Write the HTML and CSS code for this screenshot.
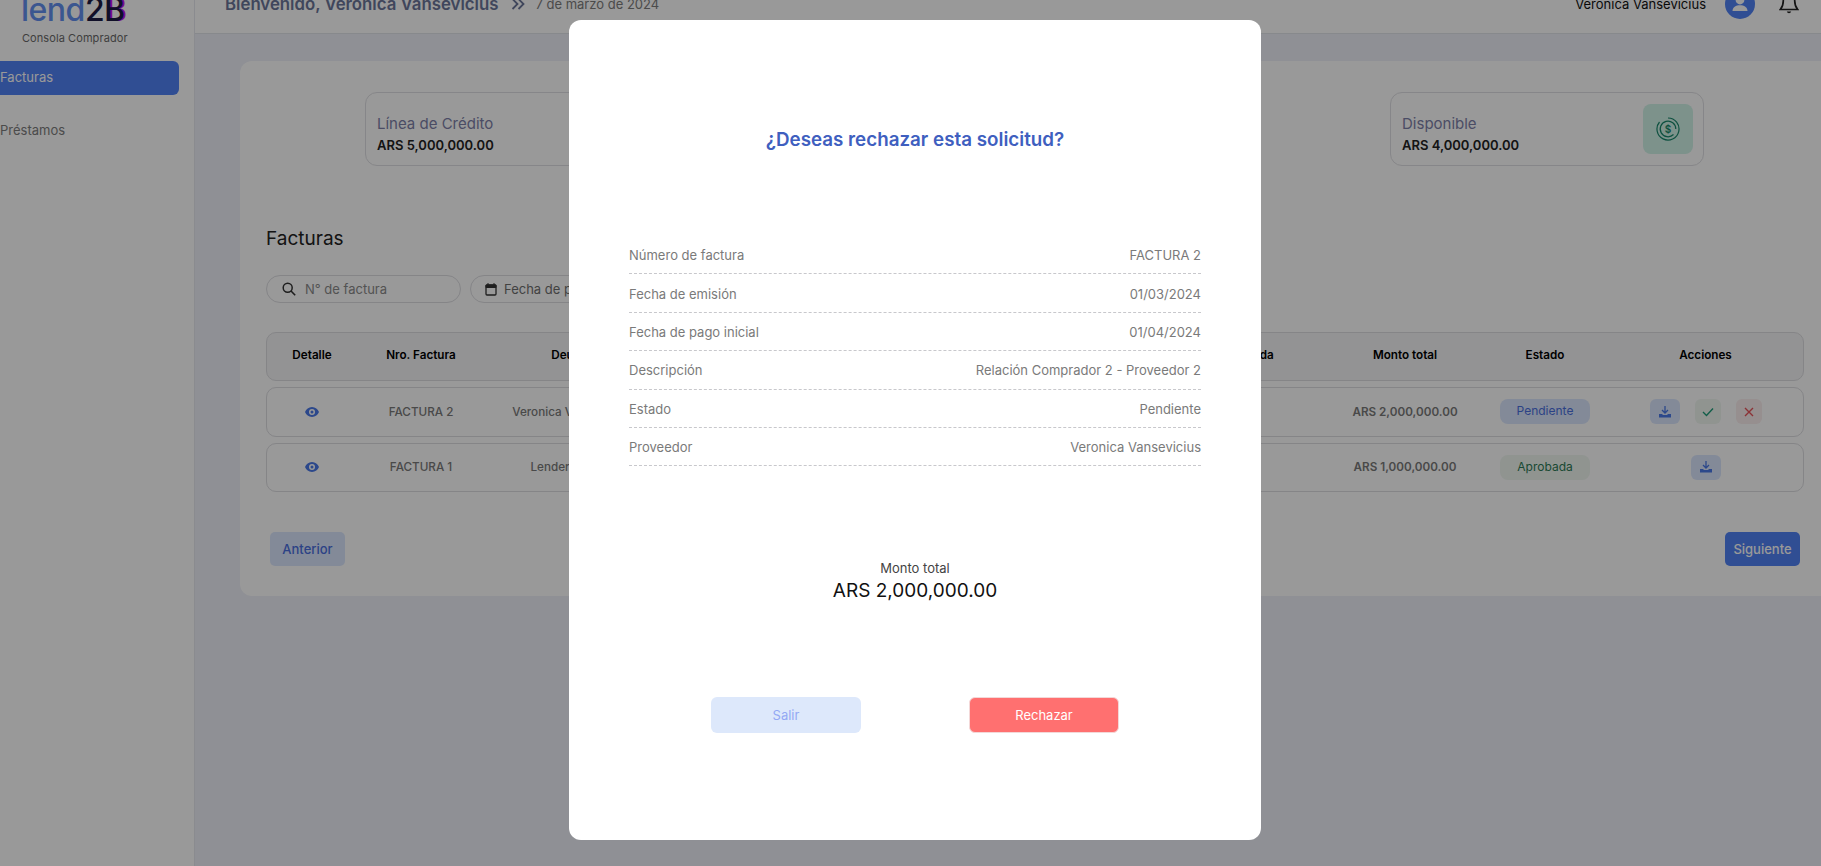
FILE: index.html
```html
<!DOCTYPE html>
<html lang="es">
<head>
<meta charset="utf-8">
<title>Facturas</title>
<link rel="stylesheet" href="styles.css">
</head>
<body>
<div class="app">
  <aside class="sidebar">
    <div class="logo"><span class="logo-mark"><span class="logo-lend">lend</span><span class="logo-2b">2<span class="logo-b">B</span></span></span></div>
    <div class="logo-sub">Consola Comprador</div>
    <nav class="nav">
      <a class="nav-item active">Facturas</a>
      <a class="nav-item">Préstamos</a>
    </nav>
  </aside>
  <div class="content">
    <header class="topbar">
      <div class="welcome">
        <span class="welcome-name">Bienvenido, Veronica Vansevicius</span>
        <svg class="chev" viewBox="0 0 14 12" width="14" height="12"><path d="M1.5 1l5 5-5 5M7.5 1l5 5-5 5" fill="none" stroke="#6b7699" stroke-width="1.8"/></svg>
        <span class="welcome-date">7 de marzo de 2024</span>
      </div>
      <div class="user">
        <span class="user-name">Veronica Vansevicius</span>
        <span class="avatar"><svg viewBox="0 0 30 30" width="30" height="30"><circle cx="15" cy="11" r="4.4" fill="#fff"/><path d="M7.5 22c0-4 3.4-5.8 7.5-5.8s7.500 1.800 7.500 5.800z" fill="#fff"/></svg></span>
        <svg class="bell" viewBox="0 0 20 24" width="20" height="24"><path d="M10 2.500c-3.700 0-5.700 2.800-5.700 6.300 0 5-1.500 7-3 8.700h17.400c-1.500-1.700-3-3.700-3-8.700 0-3.500-2-6.300-5.700-6.300z" fill="none" stroke="#222" stroke-width="1.700"/><path d="M7.800 19.500a2.300 2.300 0 0 0 4.400 0z" fill="#222"/></svg>
      </div>
    </header>
    <main class="main">
      <section class="card">
        <div class="stats">
          <div class="stat">
            <div class="stat-text"><div class="stat-label">Línea de Crédito</div><div class="stat-value">ARS 5,000,000.00</div></div>
          </div>
          <div class="stat">
            <div class="stat-text"><div class="stat-label">Utilizado</div><div class="stat-value">ARS 1,000,000.00</div></div>
          </div>
          <div class="stat">
            <div class="stat-text"><div class="stat-label">Disponible</div><div class="stat-value">ARS 4,000,000.00</div></div>
            <div class="stat-icon">
              <svg viewBox="0 0 24 24" width="24" height="24" fill="none" stroke="#17876a" stroke-width="1.200"><path d="M12 1a11 11 0 1 1-8.500 4"/><path d="M17.500 17.500A7.800 7.800 0 1 1 19.800 12"/><text x="12" y="15.500" text-anchor="middle" class="stat-dollar">$</text></svg>
            </div>
          </div>
        </div>
        <h2 class="section-title">Facturas</h2>
        <div class="filters">
          <div class="filter filter-search">
            <svg viewBox="0 0 14 14" width="14" height="14"><circle cx="5.700" cy="5.700" r="4.500" fill="none" stroke="#333" stroke-width="1.500"/><path d="M9 9l4.200 4.200" stroke="#333" stroke-width="1.600"/></svg>
            <span>N° de factura</span>
          </div>
          <div class="filter filter-date">
            <svg viewBox="0 0 12 14" width="12" height="14"><rect x="1" y="3" width="10" height="10" rx="1" fill="none" stroke="#333" stroke-width="1.300"/><path d="M1 3h10v2.500H1zM3 1v2M9 1v2" fill="#333" stroke="#333"/></svg>
            <span>Fecha de pago</span>
          </div>
        </div>
        <div class="table">
          <div class="tr th">
            <div>Detalle</div><div>Nro. Factura</div><div>Deudor</div><div>Descripción</div><div>Fecha de emisión</div><div>Fecha vencida</div><div>Monto total</div><div>Estado</div><div>Acciones</div>
          </div>
          <div class="tr td">
            <div><svg class="eye" viewBox="0 0 14 10" width="14" height="10"><path d="M7 0C3.600 0 1.200 2.300 0 5c1.200 2.700 3.600 5 7 5s5.800-2.300 7-5c-1.200-2.700-3.600-5-7-5zm0 8a3 3 0 1 1 0-6 3 3 0 0 1 0 6z" fill="#4a78e8"/><circle cx="7" cy="5" r="1.500" fill="#4a78e8"/></svg></div>
            <div>FACTURA 2</div><div>Veronica Vansevicius</div><div></div><div></div><div></div>
            <div class="amount">ARS 2,000,000.00</div>
            <div><span class="badge badge-pending">Pendiente</span></div>
            <div class="actions">
              <span class="act act-dl"><svg viewBox="0 0 12 12" width="12" height="12"><path d="M6 0v6.500M3 4l3 3 3-3" fill="none" stroke="#4a78e8" stroke-width="1.300"/><path d="M0 8h3l1 1h4l1-1h3v3.500H0z" fill="#4a78e8"/></svg></span>
              <span class="act act-ok"><svg viewBox="0 0 12 10" width="12" height="10"><path d="M1 5l3.500 3.500L11 1.500" fill="none" stroke="#1f9d7a" stroke-width="1.400"/></svg></span>
              <span class="act act-no"><svg viewBox="0 0 10 10" width="10" height="10"><path d="M1 1l8 8M9 1L1 9" stroke="#e8545a" stroke-width="1.400"/></svg></span>
            </div>
          </div>
          <div class="tr td">
            <div><svg class="eye" viewBox="0 0 14 10" width="14" height="10"><path d="M7 0C3.600 0 1.200 2.300 0 5c1.200 2.700 3.600 5 7 5s5.800-2.300 7-5c-1.200-2.700-3.600-5-7-5zm0 8a3 3 0 1 1 0-6 3 3 0 0 1 0 6z" fill="#4a78e8"/><circle cx="7" cy="5" r="1.500" fill="#4a78e8"/></svg></div>
            <div>FACTURA 1</div><div>Lender 2B S.A.</div><div></div><div></div><div></div>
            <div class="amount">ARS 1,000,000.00</div>
            <div><span class="badge badge-ok">Aprobada</span></div>
            <div class="actions">
              <span class="act act-dl"><svg viewBox="0 0 12 12" width="12" height="12"><path d="M6 0v6.500M3 4l3 3 3-3" fill="none" stroke="#4a78e8" stroke-width="1.300"/><path d="M0 8h3l1 1h4l1-1h3v3.500H0z" fill="#4a78e8"/></svg></span>
            </div>
          </div>
        </div>
        <div class="pager">
          <button class="pager-btn pager-prev">Anterior</button>
          <button class="pager-btn pager-next">Siguiente</button>
        </div>
      </section>
    </main>
  </div>
</div>
<div class="overlay">
  <div class="modal">
    <h1 class="modal-title">¿Deseas rechazar esta solicitud?</h1>
    <dl class="details">
      <div class="detail"><dt>Número de factura</dt><dd>FACTURA 2</dd></div>
      <div class="detail"><dt>Fecha de emisión</dt><dd>01/03/2024</dd></div>
      <div class="detail"><dt>Fecha de pago inicial</dt><dd>01/04/2024</dd></div>
      <div class="detail"><dt>Descripción</dt><dd>Relación Comprador 2 - Proveedor 2</dd></div>
      <div class="detail"><dt>Estado</dt><dd>Pendiente</dd></div>
      <div class="detail"><dt>Proveedor</dt><dd>Veronica Vansevicius</dd></div>
    </dl>
    <div class="total">
      <div class="total-label">Monto total</div>
      <div class="total-value">ARS 2,000,000.00</div>
    </div>
    <div class="modal-actions">
      <button class="modal-btn btn-exit">Salir</button>
      <button class="modal-btn btn-reject">Rechazar</button>
    </div>
  </div>
</div>
</body>
</html>
```
FILE: styles.css
```css
* { box-sizing: border-box; }
html, body { margin: 0; height: 100%; overflow: hidden; }
body { font-family: Inter, "Liberation Sans", sans-serif; background: #fff; color: #222; }
button { font-family: inherit; }

.app { display: flex; margin-top: -26px; height: 892px; }

.sidebar { width: 195px; flex: none; background: #fff; border-right: 1px solid #e6e8ee; }
.logo { height: 48px; padding-left: 21px; display: flex; align-items: flex-end; }
.logo-mark { font-size: 32px; line-height: 24px; font-weight: 500; letter-spacing: -0.5px; }
.logo-lend { color: #6390f0; }
.logo-2b { color: #1c1a44; }
.logo-b { text-shadow: 2px 0 0 #c814f0; }
.logo-sub { margin-top: 9px; padding-left: 22px; font-size: 11px; line-height: 14px; color: #6a6a6a; letter-spacing: .08px; }
.nav { margin-top: 16px; display: flex; flex-direction: column; gap: 17px; }
.nav-item { display: block; width: 179px; height: 37px; line-height: 36px; font-size: 13px; color: #7d7d7d; border-radius: 0 6px 6px 0; }
.nav-item.active { height: 34px; line-height: 33px; background: #5082f5; color: #fff; }

.content { flex: 1; min-width: 0; display: flex; flex-direction: column; }
.topbar { height: 60px; flex: none; background: #fff; border-bottom: 1px solid #e2e4ea; display: flex; align-items: center; justify-content: space-between; padding: 0 22px 0 30px; }
.welcome { display: flex; align-items: center; }
.welcome-name { font-size: 16.800px; font-weight: 600; color: #6b7699; }
.chev { margin-left: 13px; }
.welcome-date { margin-left: 10px; font-size: 13px; color: #7d7d7d; }
.user { display: flex; align-items: center; }
.user-name { font-size: 13px; color: #111; }
.avatar { width: 30px; height: 30px; margin-left: 19px; border-radius: 50%; background: #5082f5; display: block; overflow: hidden; }
.bell { margin-left: 24px; }

.main { flex: 1; background: #eef0f8; padding: 27px 0 0 45px; }
.card { height: 535px; background: #fff; border-radius: 12px 0 0 12px; padding: 31px 17px 0 26px; }
.stats { display: flex; justify-content: space-between; padding: 0 100px 0 99px; }
.stat { width: 314px; height: 74px; border: 1px solid #e0e0e4; border-radius: 12px; padding: 0 10px 0 11px; display: flex; align-items: center; justify-content: space-between; }
.stat-text { padding-top: 9px; }
.stat-label { font-size: 15px; line-height: 20px; color: #7d7fa8; margin-bottom: 2px; }
.stat-value { font-size: 13px; line-height: 18px; font-weight: 600; color: #222; }
.stat-icon { width: 50px; height: 50px; background: #d0f3e8; border-radius: 8px; display: flex; align-items: center; justify-content: center; }
.stat-dollar { font-family: Inter, sans-serif; font-size: 10px; font-weight: 600; fill: #17876a; stroke: none; }

.section-title { margin: 61px 0 0; font-size: 19px; line-height: 24px; font-weight: 400; color: #222; }
.filters { display: flex; gap: 9px; margin-top: 24px; }
.filter { height: 28px; border: 1px solid #dedee2; border-radius: 14px; display: flex; align-items: center; font-size: 13px; color: #8a8a8a; overflow: hidden; }
.filter-search { width: 195px; padding-left: 15px; gap: 9px; }
.filter-date { width: 195px; padding-left: 14px; gap: 7px; color: #6f6f6f; }

.table { margin-top: 29px; display: flex; flex-direction: column; gap: 6px; }
.tr { display: grid; grid-template-columns: 90px 128px 174px 240px 239px 190px 154px 126px 1fr; align-items: center; text-align: center; border: 1px solid #dedee2; border-radius: 10px; font-size: 11.700px; }
.th { height: 49px; background: #f5f5f7; font-weight: 600; color: #000; padding-bottom: 4px; }
.td { height: 49.500px; color: #7a7a7a; font-weight: 500; }
.eye { display: block; margin: 0 auto; }
.amount { font-weight: 600; }
.badge { display: inline-block; width: 90px; height: 25px; line-height: 24px; border-radius: 8px; font-size: 12px; font-weight: 400; vertical-align: middle; }
.badge-pending { background: #dbe7fd; color: #4a6fe0; }
.badge-ok { background: #f0f7f1; color: #2d7a55; }
.actions { display: flex; justify-content: center; gap: 15px; }
.act { height: 25px; border-radius: 6px; display: flex; align-items: center; justify-content: center; }
.act-dl { width: 30px; background: #dbe7fd; }
.act-ok { width: 26px; background: #f0f7f1; }
.act-no { width: 26px; background: #fbeeee; }

.pager { display: flex; justify-content: space-between; margin-top: 40px; padding: 0 4px; }
.pager-btn { height: 34px; border: 0; border-radius: 5px; font-size: 13px; font-weight: 500; }
.pager-prev { width: 75px; background: #dbe7fd; color: #4a6fe0; }
.pager-next { width: 75px; background: #5082f5; color: #fff; }

.overlay { position: fixed; inset: 0; background: rgba(0,0,0,.4); display: flex; justify-content: center; align-items: flex-start; padding: 20px 0 0 9px; }
.modal { width: 692px; height: 820px; background: #fff; border-radius: 12px; padding: 108px 60px 0; }
.modal-title { margin: 0; text-align: center; font-size: 18.800px; line-height: 24px; font-weight: 600; color: #3f5fbf; }
.details { margin: 84px 0 0; }
.detail { display: flex; justify-content: space-between; align-items: center; height: 38.400px; padding-top: 1px; border-bottom: 1px dashed #c8c8cc; font-size: 13px; color: #7a7a7a; }
.detail dt, .detail dd { margin: 0; }
.total { margin-top: 94px; text-align: center; }
.total-label { font-size: 13px; line-height: 16px; color: #444; }
.total-value { margin-top: 2px; font-size: 19px; line-height: 26px; color: #111; }
.modal-actions { margin-top: 93px; display: flex; justify-content: space-between; padding: 0 82px; }
.modal-btn { width: 150px; height: 36px; border-radius: 6px; font-size: 13px; }
.btn-exit { background: #dde8fb; border: 0; color: #93a8f4; }
.btn-reject { background: #ff7070; border: 1px solid #f3d8d8; color: #fff; }
```
